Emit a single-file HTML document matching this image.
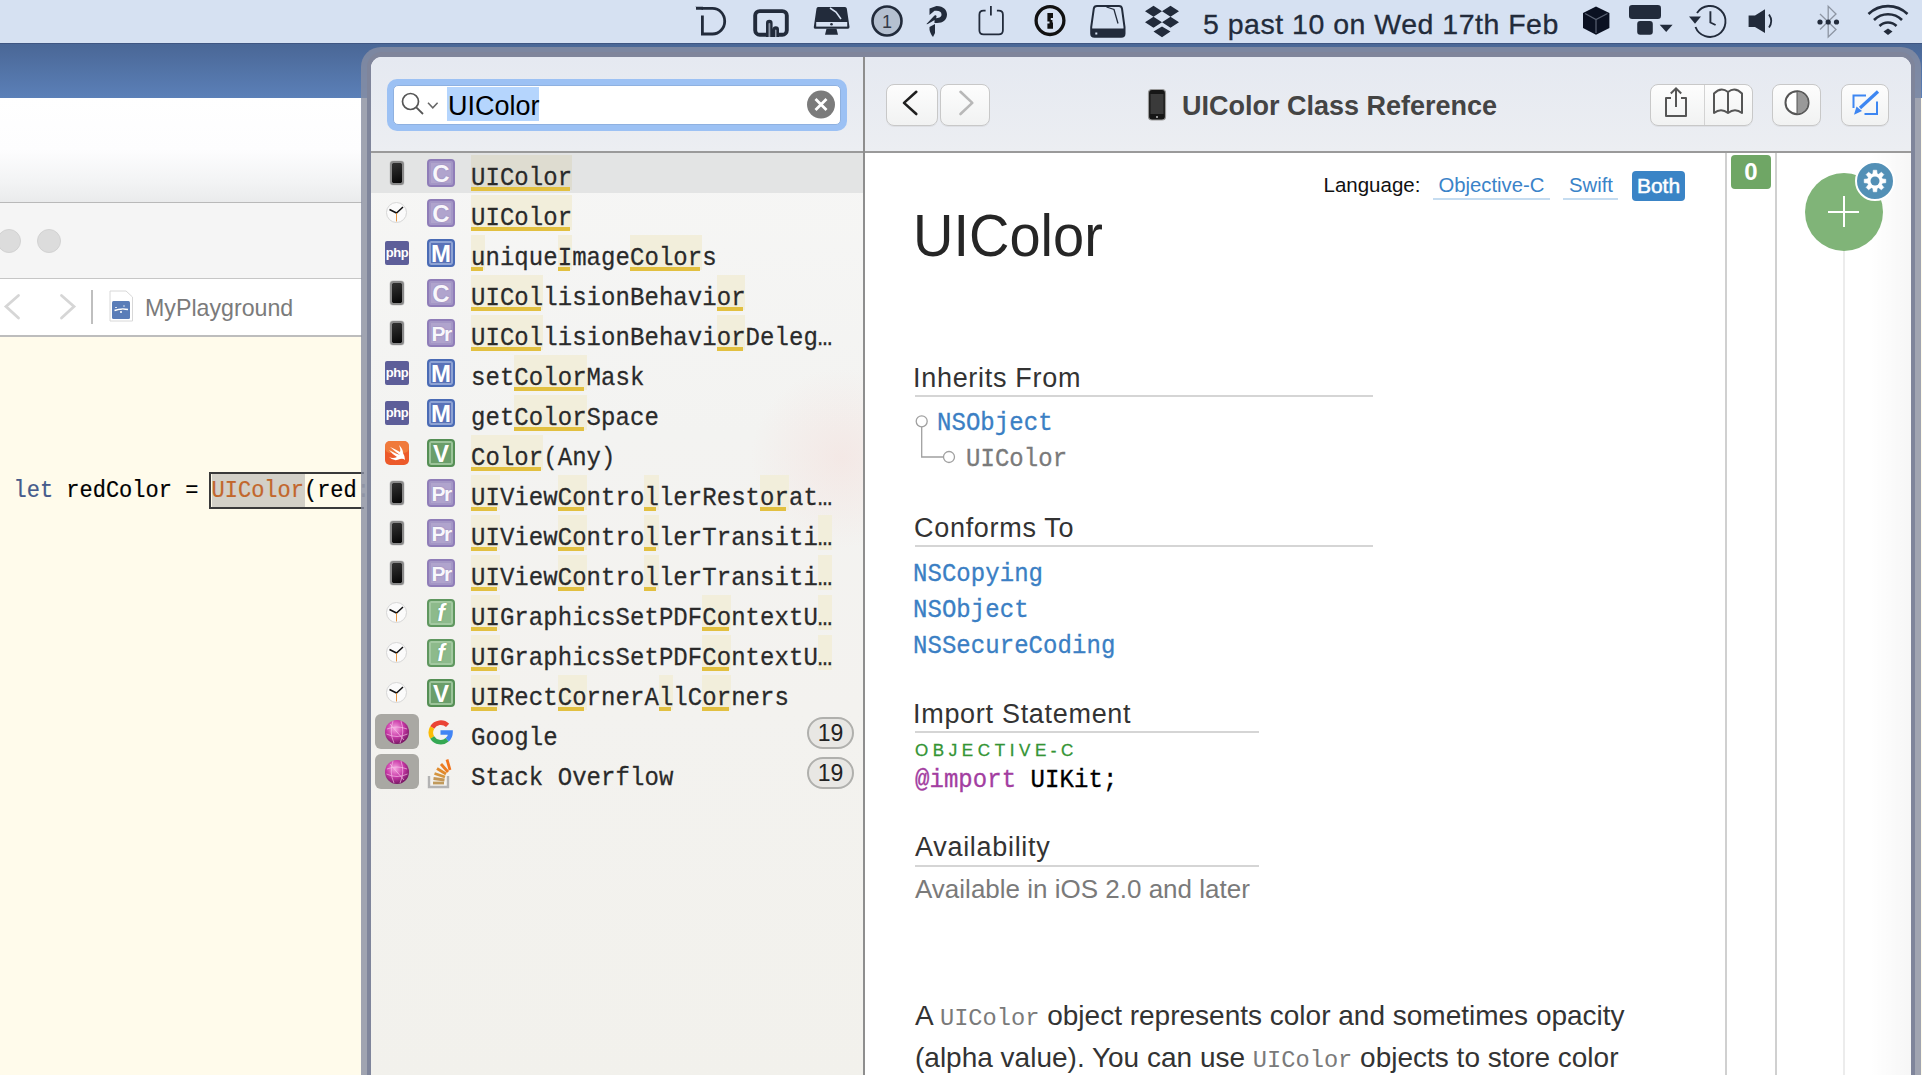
<!DOCTYPE html>
<html><head><meta charset="utf-8">
<style>
*{margin:0;padding:0;box-sizing:border-box}
html,body{width:1922px;height:1075px;overflow:hidden;background:#fffbeb;font-family:"Liberation Sans",sans-serif}
.a{position:absolute}
.mono{font-family:"Liberation Mono",monospace}
#menubar{left:0;top:0;width:1922px;height:43px;background:#d6e1f2}
#menuline{left:0;top:43px;width:1922px;height:1px;background:#3f5682}
#bluestrip{left:0;top:44px;width:1922px;height:54px;background:linear-gradient(#4a6796,#5b80b8)}
#xwhite{left:0;top:98px;width:362px;height:104px;background:linear-gradient(#fff 0%,#fdfdfe 50%,#f2f3f4 82%,#eaebec 100%)}
#xl1{left:0;top:202px;width:362px;height:1px;background:#b9b9b9}
#xtool{left:0;top:203px;width:362px;height:75px;background:#f5f5f5}
#xl2{left:0;top:278px;width:362px;height:1px;background:#c6c6c6}
#xcrumb{left:0;top:279px;width:362px;height:57px;background:#fff}
#xl3{left:0;top:335px;width:362px;height:2px;background:#bdbdbd}
#win{left:361px;top:47px;width:1560px;height:1100px;border-radius:20px;background:rgba(136,142,162,0.8)}
#win2{left:367px;top:52px;width:1548px;height:1100px;border-radius:15px;background:#7f859b}
#content{left:371px;top:57px;width:1540px;height:1100px;border-radius:11px;background:#fff;overflow:hidden}
#hdrL{left:371px;top:57px;width:493px;height:95px;background:linear-gradient(#e5e9f1,#eceef2);border-top-left-radius:11px}
#hdrR{left:865px;top:57px;width:1046px;height:95px;background:linear-gradient(#e5e9f1,#eceef2);border-top-right-radius:11px}
#hdiv{left:371px;top:151px;width:1540px;height:2px;background:#9a9a9a}
#vdiv{left:863px;top:57px;width:2px;height:1020px;background:#8e8e8e}
#side{left:371px;top:153px;width:492px;height:930px;background:radial-gradient(circle at 470px 305px,rgba(245,205,200,0.28),rgba(245,205,200,0) 90px),linear-gradient(#f6f6f5,#f3f3f1 30%,#f3f2ef 60%,#f2f1ec)}
#sel{left:371px;top:153px;width:492px;height:40px;background:#e3e4e4}
#search{left:387px;top:79px;width:460px;height:52px;border-radius:10px;background:#9cc1f4}
#searchIn{left:393px;top:85px;width:448px;height:40px;border-radius:5px;background:#fff;border:1px solid #8fb1e0}
#stxt{left:447px;top:87px;height:34px;width:92px;background:#b5d5fd;font-size:27px;line-height:39px;color:#000;padding-left:1px}
.nb{border:1px solid #c8c8c8;border-radius:8px;background:linear-gradient(#fdfdfd,#f1f2f2);box-shadow:0 1px 0 rgba(0,0,0,.05)}
#title{left:1182px;top:90.5px;font-size:27px;font-weight:bold;color:#444;white-space:nowrap}
.row{position:absolute;left:471px;font-size:24px;letter-spacing:0.05px;line-height:24px;color:#2a2a2a;-webkit-text-stroke:0.25px #2a2a2a;transform:scaleY(1.04);transform-origin:0 19px;white-space:pre;font-family:"Liberation Mono",monospace}
.hlb{position:absolute;background:#f2eedb}
.hlu{position:absolute;background:#e2c040;height:4px}
.badge{position:absolute;left:427px;width:28px;height:28px;border-radius:4px;color:#ebe7f4;font-size:24px;font-weight:bold;text-align:center;line-height:25px}
.bC{background:#b0a4cd;border:2px solid #8f7db8;box-shadow:inset 0 0 0 2px #a497c6;color:#f8f7fb;text-shadow:0 0 1.5px #8a78b4}
.bM{background:#5a73b8;border:2px solid #4a6bb5;box-shadow:inset 0 0 0 2px #8ea3d4;color:#fff}
.bV{background:#6a9e6a;border:2px solid #558f55;box-shadow:inset 0 0 0 2px #9cc49a;color:#fff}
.bPr{background:#b0a4cd;border:2px solid #8f7db8;box-shadow:inset 0 0 0 2px #a497c6;color:#f8f7fb;text-shadow:0 0 1.5px #8a78b4;font-size:21px;letter-spacing:-1.5px;font-weight:bold}
.bf{background:#8dba8b;border:2px solid #5f975f;box-shadow:inset 0 0 0 2px #a3c9a1;color:#fff;text-shadow:0 0 1.5px #5f975f;font-style:italic;font-family:"Liberation Sans",sans-serif;font-weight:bold;font-size:23px}
.php{position:absolute;left:385px;width:24px;height:24px;border-radius:2px;background:#5d5e99;color:#fff;font-size:13px;font-weight:bold;line-height:24px;text-align:center;letter-spacing:-0.5px}
.phone{position:absolute;left:390px;width:14px;height:24px;border-radius:3px;background:linear-gradient(160deg,#333,#050505) padding-box;border:2px solid #8a8a8a;box-shadow:0 0 0 0.5px #ccc}
.clock{position:absolute;left:386px;width:21px;height:21px;border-radius:50%;background:#fbfbfb;border:1px solid #d6d6d6}
.doch{position:absolute;left:915px;font-size:27px;letter-spacing:0.7px;color:#333;white-space:nowrap}
.docl{position:absolute;left:915px;height:2px;background:#d5d5d5}
.link{color:#3b7fc4}
.dm{letter-spacing:0.05px;-webkit-text-stroke:0.3px currentColor;transform:scaleY(1.06);transform-origin:0 20px}
</style></head><body>
<div class="a" id="menubar"></div>
<div class="a" id="menuline"></div>
<div class="a" id="bluestrip"></div>
<div class="a" id="xwhite"></div>
<div class="a" id="xl1"></div>
<div class="a" id="xtool"></div>
<div class="a" id="xl2"></div>
<div class="a" id="xcrumb"></div>
<div class="a" id="xl3"></div>

<div class="a" style="left:-3px;top:229px;width:24px;height:24px;border-radius:50%;background:#dcdcdc;border:1px solid #d2d2d2"></div>
<div class="a" style="left:37px;top:229px;width:24px;height:24px;border-radius:50%;background:#dcdcdc;border:1px solid #d2d2d2"></div>
<svg class="a" style="left:0;top:280px" width="362" height="56" viewBox="0 280 362 56">
 <path d="M18.5,295.5 L6,306.5 L18.5,318" fill="none" stroke="#d6d6d6" stroke-width="2.8" stroke-linecap="round"/>
 <path d="M61.5,295.5 L74,306.5 L61.5,318" fill="none" stroke="#d6d6d6" stroke-width="2.8" stroke-linecap="round"/>
 <line x1="92" y1="290" x2="92" y2="324" stroke="#b8b8b8" stroke-width="1.8"/>
 <path d="M110,291 L126,291 L132.5,297 L132.5,321 L110,321 Z" fill="#fff" stroke="#d8d8d8" stroke-width="1"/>
 <rect x="112" y="301" width="18" height="18" rx="1.5" fill="#5a7db8"/>
 <path d="M114.5,310.5 Q121,308 128,309.5 M116,307 L116,308 M124,305.5 L124,306.5 M121,311 L121,313" stroke="#fff" stroke-width="1.5"/>
</svg>
<div class="a" style="left:145px;top:294.5px;font-size:23.2px;color:#7b7b7b;white-space:nowrap">MyPlayground</div>
<div class="a" style="left:209px;top:472px;width:155px;height:37px;border:2px solid #3a3a3a;border-right:none"></div>
<div class="a" style="left:212px;top:473.5px;width:93px;height:33px;background:#d3d0c7"></div>
<div class="a mono" style="left:13.5px;top:479px;font-size:22px;color:#000;white-space:pre;-webkit-text-stroke:0.2px currentColor;transform:scaleY(1.06);transform-origin:0 18px"><span style="color:#465b8c">let</span> redColor = <span style="color:#c2662b">UIColor</span>(red<span style="color:#aaa">:</span></div>
<div class="a" id="win"></div>
<div class="a" id="win2"></div>
<div class="a" id="content"></div>
<div class="a" id="hdrL"></div>
<div class="a" id="hdrR"></div>
<div class="a" id="side"></div>
<div class="a" id="sel"></div>
<div class="a" id="hdiv"></div>
<div class="a" id="vdiv"></div>
<div class="a" id="search"></div>
<div class="a" id="searchIn"></div>
<div class="a" id="stxt">UIColor</div>
<div class="a nb" style="left:886px;top:84px;width:52px;height:42px"></div>
<div class="a nb" style="left:940px;top:84px;width:50px;height:42px"></div>
<div class="a nb" style="left:1650px;top:84px;width:103px;height:42px"></div>
<div class="a nb" style="left:1772px;top:84px;width:49px;height:42px"></div>
<div class="a nb" style="left:1841px;top:84px;width:48px;height:42px"></div>
<div class="a" id="title">UIColor Class Reference</div>

<div class="a" style="left:1323.5px;top:172.5px;font-size:20.5px;color:#111;white-space:nowrap">Language:</div>
<div class="a" style="left:1438.5px;top:174px;font-size:20.3px;color:#3a83c8;white-space:nowrap">Objective-C</div>
<div class="a" style="left:1433px;top:198px;width:117px;height:2px;background:#c5dcf0"></div>
<div class="a" style="left:1569px;top:174px;font-size:20.3px;color:#3a83c8;white-space:nowrap">Swift</div>
<div class="a" style="left:1563px;top:198px;width:55px;height:2px;background:#c5dcf0"></div>
<div class="a" style="left:1632px;top:171px;width:53px;height:30px;border-radius:4px;background:#3a84c6;color:#fff;font-size:21px;line-height:30px;text-align:center;-webkit-text-stroke:0.5px #fff">Both</div>
<div class="a" style="left:1870px;top:153px;width:41px;height:930px;background:linear-gradient(to right,rgba(0,0,0,0),rgba(0,0,0,0.035))"></div>
<div class="a" style="left:1725px;top:153px;width:2px;height:930px;background:#d0d0d0"></div>
<div class="a" style="left:1775px;top:153px;width:2px;height:930px;background:#d0d0d0"></div>
<div class="a" style="left:1843px;top:250px;width:2px;height:830px;background:#ececec"></div>
<div class="a" style="left:1731px;top:155px;width:40px;height:34px;border-radius:4px;background:#6fa665;color:#fff;font-size:24px;font-weight:bold;line-height:34px;text-align:center">0</div>
<div class="a" style="left:1805px;top:173px;width:78px;height:78px;border-radius:50%;background:#80b478"></div>
<div class="a" style="left:1828px;top:211px;width:31px;height:2px;background:#fff"></div>
<div class="a" style="left:1843px;top:196px;width:2px;height:31px;background:#fff"></div>
<div class="a" style="left:1855px;top:161px;width:40px;height:40px;border-radius:50%;background:#5390b6;border:2px solid #fff"></div>
<div class="a" style="left:913px;top:201px;font-size:56px;color:#262626;white-space:nowrap;transform:scaleY(1.05);transform-origin:0 0">UIColor</div>
<div class="doch" style="top:363px;left:913px">Inherits From</div>
<div class="docl" style="top:395px;width:458px"></div>
<div class="a mono link dm" style="left:937px;top:409.5px;font-size:24px;white-space:nowrap">NSObject</div>
<div class="a mono dm" style="left:966px;top:445.5px;font-size:24px;color:#7a7a7a;white-space:nowrap">UIColor</div>
<div class="doch" style="top:513px;left:914px">Conforms To</div>
<div class="docl" style="top:545px;width:458px"></div>
<div class="a mono link dm" style="left:913px;top:560.5px;font-size:24px;white-space:nowrap">NSCopying</div>
<div class="a mono link dm" style="left:913px;top:596.5px;font-size:24px;white-space:nowrap">NSObject</div>
<div class="a mono link dm" style="left:913px;top:632.5px;font-size:24px;white-space:nowrap">NSSecureCoding</div>
<div class="doch" style="top:699px;left:913px">Import Statement</div>
<div class="docl" style="top:731px;width:344px"></div>
<div class="a" style="left:915px;top:741px;font-size:17px;color:#349434;letter-spacing:4.6px;-webkit-text-stroke:0.3px #349434;white-space:nowrap">OBJECTIVE-C</div>
<div class="a mono dm" style="left:915px;top:766.5px;font-size:24px;color:#000;white-space:nowrap"><span style="color:#a33ea1">@import</span> UIKit;</div>
<div class="doch" style="top:832px">Availability</div>
<div class="docl" style="top:865px;width:344px"></div>
<div class="a" style="left:915px;top:874px;font-size:26px;color:#7a7a7a;white-space:nowrap">Available in iOS 2.0 and later</div>
<div class="a" style="left:915px;top:995px;font-size:28px;color:#333;white-space:nowrap;line-height:42px">A <span class="mono" style="color:#7a7a7a;font-size:23.7px;line-height:0">UIColor</span> object represents color and sometimes opacity<br>(alpha value). You can use <span class="mono" style="color:#7a7a7a;font-size:23.7px;line-height:0">UIColor</span> objects to store color</div>

<svg class="a" style="left:0;top:0" width="1922" height="43" viewBox="0 0 1922 43">
 <g fill="none" stroke="#222b3b" stroke-width="2.8">
  <path d="M696,8.4 L712.5,8.4 A12.2,12.8 0 0 1 712.5,34 L702.4,34 L702.4,15.5"/>
 </g>
 <path d="M695,6.8 L703,6.8 L703,10 Z" fill="#222b3b"/>
 <rect x="755.2" y="11.1" width="31.6" height="23.7" rx="4.5" fill="none" stroke="#222b3b" stroke-width="3.9"/>
 <path d="M766,37 L766,23 A3.3,3.3 0 0 1 772.6,23 L772.6,37 Z M772.6,37 L772.6,29.5 A3.2,3.2 0 0 1 779,29.5 L779,37 Z" fill="#222b3b"/>
 <path d="M768.5,37 L768.5,23.5 A1,1 0 0 1 770.3,23.5 L770.3,37 Z M775,37 L775,30 A1,1 0 0 1 776.5,30 L776.5,37 Z" fill="#b9c3d3" opacity="0.7"/>
 <path d="M818,7 L845,7 Q846.5,7 846.8,8.5 L849.5,27 Q849.5,28.8 848,28.8 L815,28.8 Q813.5,28.8 813.8,27 L816.5,8.5 Q816.8,7 818,7 Z" fill="#222b3b"/>
 <rect x="816.2" y="22" width="31" height="4.6" fill="#d6e1f2"/>
 <circle cx="831.5" cy="24.3" r="1.3" fill="#222b3b"/>
 <path d="M825,34.8 L826.5,28.8 L836.5,28.8 L838,34.8 Z" fill="#222b3b"/>
 <path d="M830,8 L836,12 L841,19" stroke="#d6e1f2" stroke-width="1.6" fill="none"/>
 <circle cx="887" cy="21" r="14.5" fill="#b5c0d0" stroke="#222b3b" stroke-width="2.6"/>
 <text x="887" y="28" font-family="Liberation Sans" font-size="18" fill="#333a48" text-anchor="middle">1</text>
 <path d="M936.5,6 C944,6 947,10.5 947,14.5 C947,19.5 943,23 937,23 L934.5,23 L934.5,20 Q927,25 926.5,24 L934,16 C935,14.6 937,15.4 936.5,17 L936,18.2 C940,18 941.5,16.5 941.5,14.5 C941.5,12 939.5,10.8 936.5,10.8 L934.5,10.8 L929.5,15 L929.5,8.5 Z" fill="#222b3b"/>
 <path d="M929.5,27 L935,24 L935,33 L933,37 Q929,32 929.5,27 Z" fill="#222b3b"/>
 <path d="M985.6,10.6 L983.5,10.6 Q979.4,10.6 979.4,14.7 L979.4,30.2 Q979.4,34.3 983.5,34.3 L998.8,34.3 Q1002.9,34.3 1002.9,30.2 L1002.9,14.7 Q1002.9,10.6 998.8,10.6 L996.9,10.6" fill="none" stroke="#222b3b" stroke-width="1.8"/>
 <line x1="990.9" y1="6" x2="990.9" y2="15.6" stroke="#222b3b" stroke-width="1.8"/>
 <circle cx="1050" cy="20.6" r="13.9" fill="none" stroke="#111" stroke-width="3.3"/>
 <path d="M1047.4,13 L1053,13 L1053,18 L1050.8,18 L1050.8,20 L1052.4,20 L1052.4,22.5 L1053,22.5 L1053,28.8 L1047.4,28.8 L1047.4,23.5 L1049.5,23.5 L1049.5,21.5 L1047.4,21.5 Z" fill="#111"/>
 <path d="M1097,6 L1119,6 Q1121.6,6 1122,8.6 L1124.5,27 L1124.5,33.5 Q1124.5,36.8 1121.2,36.8 L1094.5,36.8 Q1091.2,36.8 1091.2,33.5 L1091.2,27 L1093.8,8.6 Q1094.2,6 1097,6 Z" fill="none" stroke="#222b3b" stroke-width="2"/>
 <path d="M1091.5,28.5 L1124.3,28.5 L1124.3,33.5 Q1124.3,36.8 1121,36.8 L1094.8,36.8 Q1091.5,36.8 1091.5,33.5 Z" fill="#222b3b"/>
 <rect x="1095.3" y="32.5" width="2" height="2" fill="#d6e1f2"/>
 <path d="M1106.5,7 L1114,9.5 L1118,23.5" fill="none" stroke="#222b3b" stroke-width="1.3"/>
 <path d="M1153.5,5.7 L1162,11.2 L1153.5,16.7 L1145,11.2 Z M1170.5,5.7 L1179,11.2 L1170.5,16.7 L1162,11.2 Z M1153.5,16.7 L1162,22.2 L1153.5,27.7 L1145,22.2 Z M1170.5,16.7 L1179,22.2 L1170.5,27.7 L1162,22.2 Z M1162,26.5 L1170.5,31.5 L1162,37.2 L1153.5,31.5 Z" fill="#222b3b"/>
 <path d="M1583,13 L1596,6.4 L1609.4,13 L1609.4,28 L1596,34.8 L1583,28 Z" fill="#0b1122"/>
 <path d="M1585,13.5 L1596,19.5 L1607.5,13.5 M1596,19.5 L1596,33" fill="none" stroke="#5a6273" stroke-width="1.2"/>
 <rect x="1629" y="5" width="32" height="13.9" rx="3.2" fill="#222b3b"/>
 <rect x="1637.2" y="21" width="15.6" height="13.8" rx="3" fill="#222b3b"/>
 <path d="M1659.7,24.7 L1672.6,24.7 L1666.2,32 Z" fill="#222b3b"/>
 <path d="M1697,13 A15.5,15.5 0 1 1 1695.5,27" fill="none" stroke="#222b3b" stroke-width="1.9"/>
 <path d="M1689,16.5 L1701,16.5 L1695,23.8 Z" fill="#222b3b"/>
 <path d="M1710.4,11.3 L1710.4,22.5 L1715.6,25" fill="none" stroke="#222b3b" stroke-width="1.9"/>
 <path d="M1748.6,15.5 L1755,15.5 L1765,9.2 L1765,33 L1755,27 L1748.6,27 Z" fill="#222b3b"/>
 <path d="M1769,14.5 Q1773.5,21 1769,27.5" fill="none" stroke="#222b3b" stroke-width="1.8"/>
 <path d="M1820,14 L1836,29.5 L1828.2,37 L1828.2,6.4 L1836,14 L1820,29.5" fill="none" stroke="#8d95a3" stroke-width="1.3"/>
 <circle cx="1820" cy="22" r="2.6" fill="#222b3b"/><circle cx="1828.2" cy="22" r="2.6" fill="#222b3b"/><circle cx="1836.5" cy="22" r="2.6" fill="#222b3b"/>
 <path d="M1868.5,14 A28,28 0 0 1 1907.5,14" fill="none" stroke="#222b3b" stroke-width="2.6"/>
 <path d="M1874,20 A20,20 0 0 1 1902,20" fill="none" stroke="#222b3b" stroke-width="2.6"/>
 <path d="M1879.5,26 A12,12 0 0 1 1896.5,26" fill="none" stroke="#222b3b" stroke-width="2.6"/>
 <path d="M1883.5,31.5 L1888,28.5 L1892.5,31.5 L1888,35 Z" fill="#222b3b"/>
</svg>
<div class="a" style="left:1203px;top:7.5px;font-size:28.5px;letter-spacing:0.5px;-webkit-text-stroke:0.3px #222b3b;color:#222b3b;white-space:nowrap">5 past 10 on Wed 17th Feb</div>

<svg class="a" style="left:0;top:0" width="1922" height="260" viewBox="0 0 1922 260">
 <path d="M916.3,91.8 L904,102.9 L916.3,114" fill="none" stroke="#1f1f1f" stroke-width="2.6" stroke-linecap="round" stroke-linejoin="round"/>
 <path d="M960.5,91.8 L972.3,102.9 L960.5,114" fill="none" stroke="#b8b8b8" stroke-width="2.6" stroke-linecap="round" stroke-linejoin="round"/>
 <rect x="1148.5" y="89.5" width="17" height="30.5" rx="3.5" fill="#161616" stroke="#9a9a9a" stroke-width="1.2"/>
 <rect x="1150.5" y="94" width="13" height="20" fill="#3a3a3a"/>
 <circle cx="1157" cy="117" r="1" fill="#bbb"/>
 <path d="M1671,98 L1666,98 L1666,116 L1686,116 L1686,98 L1681,98" fill="none" stroke="#555" stroke-width="2" stroke-linejoin="round"/>
 <path d="M1676,107 L1676,88.5 M1670.8,93.5 L1676,88.3 L1681.2,93.5" fill="none" stroke="#555" stroke-width="2"/>
 <path d="M1714,113 L1714,93.5 Q1721,86.5 1728,92 Q1735,86.5 1742,93.5 L1742,113 Q1735,107.5 1728,113 Q1721,107.5 1714,113 Z M1728,92 L1728,113" fill="none" stroke="#555" stroke-width="2" stroke-linejoin="round"/>
 <circle cx="1797" cy="102.7" r="11.5" fill="#fff" stroke="#555" stroke-width="2"/>
 <path d="M1797,91.2 A11.5,11.5 0 0 1 1797,114.2 Z" fill="#999" stroke="#555" stroke-width="1"/>
 <path d="M1853.5,108 L1853.5,95.5 L1866,95.5 M1877,101.5 L1877,114 L1864.5,114" fill="none" stroke="#3d86f2" stroke-width="2"/>
 <path d="M1860,108 L1878,91.5" stroke="#3d86f2" stroke-width="3.2"/>
 <path d="M1854,114.8 L1856.5,106.5 L1862,111 Z" fill="#3d86f2"/>
 <circle cx="410.5" cy="101.5" r="8" fill="none" stroke="#555" stroke-width="1.7"/>
 <path d="M416.3,107.3 L423,114" stroke="#555" stroke-width="1.8"/>
 <path d="M428,102.8 L432.8,107.8 L437.6,102.8" fill="none" stroke="#666" stroke-width="1.5"/>
 <circle cx="821" cy="104.6" r="14" fill="#7b7b7b"/>
 <path d="M815.5,99.1 L826.5,110.1 M826.5,99.1 L815.5,110.1" stroke="#fff" stroke-width="2.8"/>
 <path d="M1872.09,173.98 L1872.91,173.69 L1873.29,170.23 L1876.71,170.23 L1877.09,173.69 L1877.91,173.98 L1878.68,174.35 L1881.41,172.18 L1883.82,174.59 L1881.65,177.32 L1882.02,178.09 L1882.31,178.91 L1885.77,179.29 L1885.77,182.71 L1882.31,183.09 L1882.02,183.91 L1881.65,184.68 L1883.82,187.41 L1881.41,189.82 L1878.68,187.65 L1877.91,188.02 L1877.09,188.31 L1876.71,191.77 L1873.29,191.77 L1872.91,188.31 L1872.09,188.02 L1871.32,187.65 L1868.59,189.82 L1866.18,187.41 L1868.35,184.68 L1867.98,183.91 L1867.69,183.09 L1864.23,182.71 L1864.23,179.29 L1867.69,178.91 L1867.98,178.09 L1868.35,177.32 L1866.18,174.59 L1868.59,172.18 L1871.32,174.35 Z" fill="#fff" stroke="#fff" stroke-width="0.6" stroke-linejoin="round"/><circle cx="1875" cy="181" r="4.5" fill="#5390b6"/>
</svg>

<svg class="a" style="left:905px;top:405px" width="60" height="65" viewBox="905 405 60 65">
 <circle cx="921.7" cy="421.3" r="5.5" fill="#fff" stroke="#a0a0a0" stroke-width="1.3"/>
 <path d="M921.7,426.8 L921.7,457 L943,457" fill="none" stroke="#a0a0a0" stroke-width="1.3"/>
 <circle cx="949" cy="457" r="5.5" fill="#fff" stroke="#a0a0a0" stroke-width="1.3"/>
</svg>
<div class="a" style="left:1703.5px;top:85px;width:1px;height:40px;background:#d3d3d3"></div>
<div class="hlb" style="left:471.0px;top:155px;width:101.1px;height:35px;background:#dedcd0"></div>
<div class="hlu" style="left:471.0px;top:187px;width:98.6px"></div>
<div class="row" style="top:167px">UIColor</div>
<div class="phone" style="top:161px"></div>
<div class="badge bC" style="top:159px">C</div>
<div class="hlb" style="left:471.0px;top:195px;width:101.1px;height:35px;background:#f2eedb"></div>
<div class="hlu" style="left:471.0px;top:227px;width:98.6px"></div>
<div class="row" style="top:207px">UIColor</div>
<div class="clock" style="top:202px"></div>
<svg class="a" style="left:385px;top:202px" width="22" height="22" viewBox="0 0 22 22"><path d="M4.5,7.5 L11.5,11 L18,5" fill="none" stroke="#111" stroke-width="1.5"/><path d="M11.5,11 L11.5,19.5" stroke="#e08a30" stroke-width="0.9"/></svg>
<div class="badge bC" style="top:199px">C</div>
<div class="hlb" style="left:471.0px;top:235px;width:14.4px;height:35px;background:#f2eedb"></div>
<div class="hlu" style="left:471.0px;top:267px;width:11.9px"></div>
<div class="hlb" style="left:557.7px;top:235px;width:14.4px;height:35px;background:#f2eedb"></div>
<div class="hlu" style="left:557.7px;top:267px;width:11.9px"></div>
<div class="hlb" style="left:630.0px;top:235px;width:72.2px;height:35px;background:#f2eedb"></div>
<div class="hlu" style="left:630.0px;top:267px;width:69.8px"></div>
<div class="row" style="top:247px">uniqueImageColors</div>
<div class="php" style="top:241px">php</div>
<div class="badge bM" style="top:239px">M</div>
<div class="hlb" style="left:471.0px;top:275px;width:72.2px;height:35px;background:#f2eedb"></div>
<div class="hlu" style="left:471.0px;top:307px;width:69.8px"></div>
<div class="hlb" style="left:716.6px;top:275px;width:28.9px;height:35px;background:#f2eedb"></div>
<div class="hlu" style="left:716.6px;top:307px;width:26.4px"></div>
<div class="row" style="top:287px">UICollisionBehavior</div>
<div class="phone" style="top:281px"></div>
<div class="badge bC" style="top:279px">C</div>
<div class="hlb" style="left:471.0px;top:315px;width:72.2px;height:35px;background:#f2eedb"></div>
<div class="hlu" style="left:471.0px;top:347px;width:69.8px"></div>
<div class="hlb" style="left:716.6px;top:315px;width:28.9px;height:35px;background:#f2eedb"></div>
<div class="hlu" style="left:716.6px;top:347px;width:26.4px"></div>
<div class="row" style="top:327px">UICollisionBehaviorDeleg…</div>
<div class="phone" style="top:321px"></div>
<div class="badge bPr" style="top:319px">Pr</div>
<div class="hlb" style="left:514.4px;top:355px;width:72.2px;height:35px;background:#f2eedb"></div>
<div class="hlu" style="left:514.4px;top:387px;width:69.8px"></div>
<div class="row" style="top:367px">setColorMask</div>
<div class="php" style="top:361px">php</div>
<div class="badge bM" style="top:359px">M</div>
<div class="hlb" style="left:514.4px;top:395px;width:72.2px;height:35px;background:#f2eedb"></div>
<div class="hlu" style="left:514.4px;top:427px;width:69.8px"></div>
<div class="row" style="top:407px">getColorSpace</div>
<div class="php" style="top:401px">php</div>
<div class="badge bM" style="top:399px">M</div>
<div class="hlb" style="left:471.0px;top:435px;width:72.2px;height:35px;background:#f2eedb"></div>
<div class="hlu" style="left:471.0px;top:467px;width:69.8px"></div>
<div class="row" style="top:447px">Color(Any)</div>
<svg class="a" style="left:385px;top:441px" width="24" height="24" viewBox="0 0 24 24"><rect width="24" height="24" rx="5" fill="#ec5a2a"/><rect width="24" height="12" rx="5" fill="#f39048" opacity="0.6"/><path d="M5,6 Q12,12 15,14 Q9,12 4,9 Q8,14 12,16 Q8,18 4,16 Q9,21 15,18 Q18,17 20,19 Q20,15 18,12 Q18,8 14,4 Q16,9 15,11 Q10,8 5,6 Z" fill="#fff"/></svg>
<div class="badge bV" style="top:439px">V</div>
<div class="hlb" style="left:471.0px;top:475px;width:28.9px;height:35px;background:#f2eedb"></div>
<div class="hlu" style="left:471.0px;top:507px;width:26.4px"></div>
<div class="hlb" style="left:557.7px;top:475px;width:28.9px;height:35px;background:#f2eedb"></div>
<div class="hlu" style="left:557.7px;top:507px;width:26.4px"></div>
<div class="hlb" style="left:644.4px;top:475px;width:14.4px;height:35px;background:#f2eedb"></div>
<div class="hlu" style="left:644.4px;top:507px;width:11.9px"></div>
<div class="hlb" style="left:760.0px;top:475px;width:28.9px;height:35px;background:#f2eedb"></div>
<div class="hlu" style="left:760.0px;top:507px;width:26.4px"></div>
<div class="row" style="top:487px">UIViewControllerRestorat…</div>
<div class="phone" style="top:481px"></div>
<div class="badge bPr" style="top:479px">Pr</div>
<div class="hlb" style="left:471.0px;top:515px;width:28.9px;height:35px;background:#f2eedb"></div>
<div class="hlu" style="left:471.0px;top:547px;width:26.4px"></div>
<div class="hlb" style="left:557.7px;top:515px;width:28.9px;height:35px;background:#f2eedb"></div>
<div class="hlu" style="left:557.7px;top:547px;width:26.4px"></div>
<div class="hlb" style="left:644.4px;top:515px;width:14.4px;height:35px;background:#f2eedb"></div>
<div class="hlu" style="left:644.4px;top:547px;width:11.9px"></div>
<div class="hlb" style="left:817.8px;top:515px;width:14.4px;height:35px;background:#f2eedb"></div>
<div class="row" style="top:527px">UIViewControllerTransiti…</div>
<div class="phone" style="top:521px"></div>
<div class="badge bPr" style="top:519px">Pr</div>
<div class="hlb" style="left:471.0px;top:555px;width:28.9px;height:35px;background:#f2eedb"></div>
<div class="hlu" style="left:471.0px;top:587px;width:26.4px"></div>
<div class="hlb" style="left:557.7px;top:555px;width:28.9px;height:35px;background:#f2eedb"></div>
<div class="hlu" style="left:557.7px;top:587px;width:26.4px"></div>
<div class="hlb" style="left:644.4px;top:555px;width:14.4px;height:35px;background:#f2eedb"></div>
<div class="hlu" style="left:644.4px;top:587px;width:11.9px"></div>
<div class="hlb" style="left:817.8px;top:555px;width:14.4px;height:35px;background:#f2eedb"></div>
<div class="row" style="top:567px">UIViewControllerTransiti…</div>
<div class="phone" style="top:561px"></div>
<div class="badge bPr" style="top:559px">Pr</div>
<div class="hlb" style="left:471.0px;top:595px;width:28.9px;height:35px;background:#f2eedb"></div>
<div class="hlu" style="left:471.0px;top:627px;width:26.4px"></div>
<div class="hlb" style="left:702.2px;top:595px;width:28.9px;height:35px;background:#f2eedb"></div>
<div class="hlu" style="left:702.2px;top:627px;width:26.4px"></div>
<div class="hlb" style="left:817.8px;top:595px;width:14.4px;height:35px;background:#f2eedb"></div>
<div class="row" style="top:607px">UIGraphicsSetPDFContextU…</div>
<div class="clock" style="top:602px"></div>
<svg class="a" style="left:385px;top:602px" width="22" height="22" viewBox="0 0 22 22"><path d="M4.5,7.5 L11.5,11 L18,5" fill="none" stroke="#111" stroke-width="1.5"/><path d="M11.5,11 L11.5,19.5" stroke="#e08a30" stroke-width="0.9"/></svg>
<div class="badge bf" style="top:599px">f</div>
<div class="hlb" style="left:471.0px;top:635px;width:28.9px;height:35px;background:#f2eedb"></div>
<div class="hlu" style="left:471.0px;top:667px;width:26.4px"></div>
<div class="hlb" style="left:702.2px;top:635px;width:28.9px;height:35px;background:#f2eedb"></div>
<div class="hlu" style="left:702.2px;top:667px;width:26.4px"></div>
<div class="hlb" style="left:817.8px;top:635px;width:14.4px;height:35px;background:#f2eedb"></div>
<div class="row" style="top:647px">UIGraphicsSetPDFContextU…</div>
<div class="clock" style="top:642px"></div>
<svg class="a" style="left:385px;top:642px" width="22" height="22" viewBox="0 0 22 22"><path d="M4.5,7.5 L11.5,11 L18,5" fill="none" stroke="#111" stroke-width="1.5"/><path d="M11.5,11 L11.5,19.5" stroke="#e08a30" stroke-width="0.9"/></svg>
<div class="badge bf" style="top:639px">f</div>
<div class="hlb" style="left:471.0px;top:675px;width:28.9px;height:35px;background:#f2eedb"></div>
<div class="hlu" style="left:471.0px;top:707px;width:26.4px"></div>
<div class="hlb" style="left:557.7px;top:675px;width:28.9px;height:35px;background:#f2eedb"></div>
<div class="hlu" style="left:557.7px;top:707px;width:26.4px"></div>
<div class="hlb" style="left:658.9px;top:675px;width:14.4px;height:35px;background:#f2eedb"></div>
<div class="hlu" style="left:658.9px;top:707px;width:11.9px"></div>
<div class="hlb" style="left:702.2px;top:675px;width:28.9px;height:35px;background:#f2eedb"></div>
<div class="hlu" style="left:702.2px;top:707px;width:26.4px"></div>
<div class="row" style="top:687px">UIRectCornerAllCorners</div>
<div class="clock" style="top:682px"></div>
<svg class="a" style="left:385px;top:682px" width="22" height="22" viewBox="0 0 22 22"><path d="M4.5,7.5 L11.5,11 L18,5" fill="none" stroke="#111" stroke-width="1.5"/><path d="M11.5,11 L11.5,19.5" stroke="#e08a30" stroke-width="0.9"/></svg>
<div class="badge bV" style="top:679px">V</div>
<div class="row" style="top:727px">Google</div>
<div class="a" style="left:375px;top:714px;width:44px;height:35px;border-radius:6px;background:#a9a8a3"></div>
<svg class="a" style="left:384px;top:719px" width="26" height="26" viewBox="0 0 26 26"><defs><radialGradient id="gg14" cx="0.42" cy="0.35" r="0.65"><stop offset="0" stop-color="#f6a4df"/><stop offset="0.55" stop-color="#c93aa8"/><stop offset="1" stop-color="#7a1866"/></radialGradient></defs><circle cx="13" cy="13" r="12" fill="url(#gg14)"/><path d="M3,10 Q13,6 23,10 M2.5,15 Q13,20 23.5,15 M9,2 Q5,13 10,24 M17,2 Q21,13 16,24 M6,5 L20,21" fill="none" stroke="#f7c8ea" stroke-width="0.8" opacity="0.8"/></svg>
<svg class="a" style="left:428px;top:720px" width="25" height="25" viewBox="0 0 25 25"><g fill="none" stroke-width="4.6"><path d="M19.6,5.4 A10,10 0 0 0 4.2,7.5" stroke="#ea4335"/><path d="M4.2,7.5 A10,10 0 0 0 4.2,17.5" stroke="#fbbc05"/><path d="M4.2,17.5 A10,10 0 0 0 19.2,19.8" stroke="#34a853"/><path d="M19.2,19.8 A10,10 0 0 0 22.5,12.5 L12.5,12.5" stroke="#4285f4"/></g></svg>
<div class="a" style="left:807px;top:717px;width:47px;height:32px;border-radius:16px;border:2px solid #b0b0ad;background:#e8e7e4;font-size:23px;line-height:29px;text-align:center;color:#222">19</div>
<div class="row" style="top:767px">Stack Overflow</div>
<div class="a" style="left:375px;top:754px;width:44px;height:35px;border-radius:6px;background:#a9a8a3"></div>
<svg class="a" style="left:384px;top:759px" width="26" height="26" viewBox="0 0 26 26"><defs><radialGradient id="gg15" cx="0.42" cy="0.35" r="0.65"><stop offset="0" stop-color="#f6a4df"/><stop offset="0.55" stop-color="#c93aa8"/><stop offset="1" stop-color="#7a1866"/></radialGradient></defs><circle cx="13" cy="13" r="12" fill="url(#gg15)"/><path d="M3,10 Q13,6 23,10 M2.5,15 Q13,20 23.5,15 M9,2 Q5,13 10,24 M17,2 Q21,13 16,24 M6,5 L20,21" fill="none" stroke="#f7c8ea" stroke-width="0.8" opacity="0.8"/></svg>
<svg class="a" style="left:427px;top:756px" width="28" height="34" viewBox="0 0 28 34"><path d="M2,20 L2,31 L21,31 L21,20" fill="none" stroke="#b3b3b3" stroke-width="2.4"/><g stroke-width="2.8"><path d="M6,27 L17,27" stroke="#c09a5c"/><path d="M6.5,22.5 L17.5,24" stroke="#c49656"/><path d="M7.5,17.5 L18,21" stroke="#d5953f"/><path d="M10,12.5 L19,18" stroke="#e08a2c"/><path d="M14,8 L21,16" stroke="#eb7d22"/><path d="M20,3.5 L23,14" stroke="#f2731c"/></g></svg>
<div class="a" style="left:807px;top:757px;width:47px;height:32px;border-radius:16px;border:2px solid #b0b0ad;background:#e8e7e4;font-size:23px;line-height:29px;text-align:center;color:#222">19</div>
</body></html>
